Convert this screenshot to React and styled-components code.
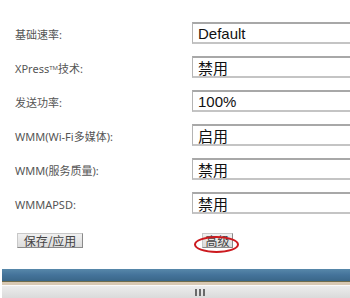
import React from "react";
import styled, { createGlobalStyle } from "styled-components";

const Global = createGlobalStyle`
  html, body { margin: 0; padding: 0; background: #fff; overflow: hidden; }
  body { width: 350px; height: 298px; }
`;

const Page = styled.div`
  width: 350px;
  height: 298px;
  display: flex;
  flex-direction: column;
  overflow: hidden;
`;

const Form = styled.div`
  display: grid;
  grid-template-columns: 177px 1fr;
  grid-auto-rows: 22px;
  row-gap: 12px;
  padding: 22px 0 0 15px;
`;

const Label = styled.div`
  display: flex;
  align-items: center;
  font-family: "Noto Sans", "Noto Sans CJK SC", sans-serif;
  font-size: 11px;
  color: #555;
  white-space: nowrap;
  padding-top: 2px;
`;

const Tm = styled.sup`
  font-size: 6px;
  vertical-align: 4px;
`;

const Field = styled.div`
  box-sizing: border-box;
  width: 190px;
  height: 22px;
  border: 1px solid #b4b4b4;
  border-top: 2px solid #a8a8a8;
  border-bottom: 2px solid #c4c4c4;
  background: #fff;
  font-family: "Liberation Sans", "Noto Sans CJK SC", sans-serif;
  font-size: 15px;
  color: #111;
  padding-left: 5px;
  display: flex;
  align-items: center;
  white-space: nowrap;
`;

const Actions = styled.div`
  display: grid;
  grid-template-columns: 177px 1fr;
  padding: 19px 0 0 15px;
  align-items: start;
`;

const Button = styled.div`
  box-sizing: border-box;
  height: 15px;
  width: ${(p) => p.$w}px;
  margin-left: ${(p) => p.$ml}px;
  position: relative;
  background: linear-gradient(#f0f0f0, #dcdcdc);
  border: 1px solid #c8c8c8;
  border-right-color: #8a8a8a;
  border-bottom-color: #8a8a8a;
  font-family: "Noto Sans CJK SC", sans-serif;
  font-size: 12px;
  line-height: 13px;
  color: #444;
  text-align: center;
`;

const Circle = styled.div`
  position: absolute;
  left: -9px;
  top: 2px;
  width: 45px;
  height: 17px;
  border: 2px solid #cc1a1f;
  border-radius: 50%;
  box-sizing: border-box;
`;

const Bottom = styled.div`
  margin-top: auto;
  margin-left: 2px;
  display: flex;
  flex-direction: column;
`;

const BlueBar = styled.div`
  height: 12px;
  background: linear-gradient(#5788aa, #44739a 50%, #3a6789);
`;

const Rule = styled.div`
  height: ${(p) => p.$h}px;
  background: ${(p) => p.$c};
`;

const Scroll = styled.div`
  height: 12px;
  background: linear-gradient(#ececec, #dadada);
  display: flex;
  justify-content: center;
  align-items: center;
`;

const Grip = styled.div`
  display: flex;
  gap: 2px;
  margin-left: 48px;
`;

const GripLine = styled.div`
  width: 2px;
  height: 7px;
  background: #6a6a6a;
`;

const rows = [
  ["基础速率:", "Default"],
  [<>XPress<Tm>TM</Tm>技术:</>, "禁用"],
  ["发送功率:", "100%"],
  ["WMM(Wi-Fi多媒体):", "启用"],
  ["WMM(服务质量):", "禁用"],
  ["WMMAPSD:", "禁用"],
];

export default function App() {
  return (
    <>
      <Global />
      <Page>
        <Form>
          {rows.map(([l, v], i) => (
            <React.Fragment key={i}>
              <Label>{l}</Label>
              <Field>{v}</Field>
            </React.Fragment>
          ))}
        </Form>
        <Actions>
          <Button $w={66} $ml={2}>保存/应用</Button>
          <Button $w={31} $ml={10}>
            高级
            <Circle />
          </Button>
        </Actions>
        <Bottom>
          <BlueBar />
          <Rule $h={1} $c="#6e6c4c" />
          <Rule $h={3} $c="#d9c9b3" />
          <Rule $h={1} $c="#fafafa" />
          <Scroll>
            <Grip>
              <GripLine />
              <GripLine />
              <GripLine />
            </Grip>
          </Scroll>
        </Bottom>
      </Page>
    </>
  );
}
